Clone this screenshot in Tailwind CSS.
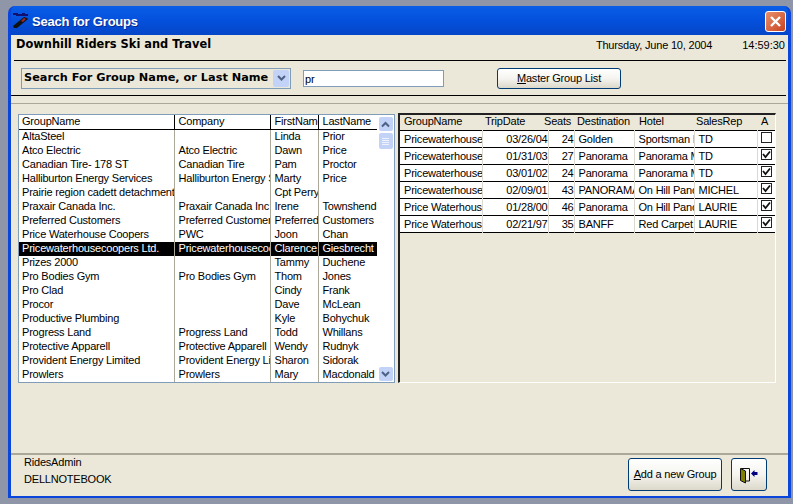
<!DOCTYPE html>
<html lang="en">
<head>
<meta charset="UTF-8">
<title>Seach for Groups</title>
<script src="https://cdn.jsdelivr.net/npm/@tailwindcss/browser@4"></script>
</head>
<body class="bg-[#8f96a8] w-[793px] h-[504px] overflow-hidden font-['Liberation_Sans',sans-serif] text-[11px] tracking-[-0.2px] leading-[14px] text-black">
<!-- window -->
<div class="ml-[8px] mt-[6px] w-[783px] h-[492px] flex flex-col rounded-t-[7px] bg-[#0a4fdc] border-x-[3px] border-b-[2px] border-[#0a46dc] overflow-hidden">
  <!-- title bar -->
  <div class="h-[29px] -mx-[3px] px-[4px] flex items-center shrink-0 bg-gradient-to-b from-[#0a5ee8] via-[#0450dc] to-[#0546c8]">
    <svg class="ml-[1px] w-[17px] h-[17px] shrink-0" viewBox="0 0 17 17">
      <path d="M0 1h5v1h4V1h3v1h3v2H3V3H0z" fill="#101070"/>
      <path d="M0 14L11 5l3 1 1 1-11 9H1z" fill="#111"/>
      <path d="M8 9l3-3 2 1-3 3z" fill="#a02828"/>
    </svg>
    <span class="ml-[2px] mt-[2px] text-white font-bold text-[13px] tracking-[-0.2px] [text-shadow:1px_1px_0_#0a2a90]">Seach for Groups</span>
    <div class="ml-auto mr-[1px] mt-[2px] w-[21px] h-[21px] rounded-[3px] border border-white bg-gradient-to-br from-[#e8906c] to-[#c8401c] flex items-center justify-center">
      <svg class="w-[13px] h-[13px]" viewBox="0 0 13 13"><path d="M2 2l9 9M11 2l-9 9" stroke="#fff" stroke-width="2.4"/></svg>
    </div>
  </div>

  <div class="flex-1 bg-[#ebe8d9] flex flex-col min-h-0">
    <!-- company header -->
    <div class="h-[25px] pl-[5px] pr-[3px] flex justify-between shrink-0">
      <span class="font-bold text-[11.4px] tracking-normal font-['DejaVu_Sans',sans-serif] mt-[2px] whitespace-nowrap">Downhill Riders Ski and Travel</span>
      <div class="flex mt-[3px]">
        <span>Thursday, June 10, 2004</span>
        <span class="ml-[30px] tracking-normal">14:59:30</span>
      </div>
    </div>
    <!-- search row -->
    <div class="ml-[3px] mr-[2px] h-[35px] border-t border-black shrink-0 flex items-center">
      <div class="ml-[7px] w-[270px] h-[21px] border border-[#7f9db9] bg-[#ebe8d9] flex items-center justify-between pl-[2px] pr-[1px]">
        <span class="font-bold text-[11.3px] tracking-normal font-['DejaVu_Sans',sans-serif] whitespace-nowrap">Search For Group Name, or Last Name</span>
        <span class="w-[16px] h-[17px] shrink-0 rounded-[2px] bg-[#c3d2f7] flex items-center justify-center">
          <svg class="w-[9px] h-[7px]" viewBox="0 0 9 7"><path d="M1 1l3.500 3.500L8 1" fill="none" stroke="#4d6185" stroke-width="2"/></svg>
        </span>
      </div>
      <div class="ml-[12px] w-[141px] h-[17px] border border-[#7f9db9] bg-white pl-[1px] leading-[16px]">pr</div>
      <div class="ml-[53px] w-[124px] h-[21px] rounded-[3px] border border-[#003c74] bg-gradient-to-b from-white via-[#f5f4ef] to-[#dcd8ca] text-center leading-[19px]"><u>M</u>aster Group List</div>
    </div>
    <div class="mr-[2px] h-[8px] border-t border-black shrink-0"></div>
    <div class="flex-1 border-t border-[#aca899] flex min-h-0 pt-[9px] pl-[7px]">
      <!-- groups list -->
      <div class="relative mt-[1px] w-[377px] h-[269px] border border-[#7f9db9] bg-white overflow-hidden">
        <table class="table-fixed w-[358px] border-collapse">
          <colgroup><col class="w-[155px]"><col class="w-[96px]"><col class="w-[48px]"><col class="w-[59px]"></colgroup>
          <thead>
            <tr class="h-[14px] border-b border-black text-left leading-[13px]">
              <th class="font-normal pl-[3px] pb-[1px] overflow-hidden whitespace-nowrap border-r border-black">GroupName</th>
              <th class="font-normal pl-[4px] pb-[1px] overflow-hidden whitespace-nowrap border-r border-black">Company</th>
              <th class="font-normal pl-[4px] pb-[1px] overflow-hidden whitespace-nowrap border-r border-black">FirstName</th>
              <th class="font-normal pl-[4px] pb-[1px] overflow-hidden whitespace-nowrap">LastName</th>
            </tr>
          </thead>
          <tbody class="leading-[13px] [&_td]:h-[14px] [&_td]:p-0 [&_td]:pb-[1px] [&_td]:pl-[4px] [&_td:first-child]:pl-[3px] [&_td]:overflow-hidden [&_td]:whitespace-nowrap [&_td:not(:last-child)]:border-r [&_td:not(:last-child)]:border-[#aca899]">
            <tr><td>AltaSteel</td><td></td><td>Linda</td><td>Prior</td></tr>
            <tr><td>Atco Electric</td><td>Atco Electric</td><td>Dawn</td><td>Price</td></tr>
            <tr><td>Canadian Tire- 178 ST</td><td>Canadian Tire</td><td>Pam</td><td>Proctor</td></tr>
            <tr><td>Halliburton Energy Services</td><td>Halliburton Energy Services</td><td>Marty</td><td>Price</td></tr>
            <tr><td>Prairie region cadett detachment</td><td></td><td>Cpt Perry</td><td></td></tr>
            <tr><td>Praxair Canada Inc.</td><td>Praxair Canada Inc</td><td>Irene</td><td>Townshend</td></tr>
            <tr><td>Preferred Customers</td><td>Preferred Customers</td><td>Preferred</td><td>Customers</td></tr>
            <tr><td>Price Waterhouse Coopers</td><td>PWC</td><td>Joon</td><td>Chan</td></tr>
            <tr class="bg-black text-white"><td>Pricewaterhousecoopers Ltd.</td><td>Pricewaterhousecoopers</td><td>Clarence</td><td>Giesbrecht</td></tr>
            <tr><td>Prizes 2000</td><td></td><td>Tammy</td><td>Duchene</td></tr>
            <tr><td>Pro Bodies Gym</td><td>Pro Bodies Gym</td><td>Thom</td><td>Jones</td></tr>
            <tr><td>Pro Clad</td><td></td><td>Cindy</td><td>Frank</td></tr>
            <tr><td>Procor</td><td></td><td>Dave</td><td>McLean</td></tr>
            <tr><td>Productive Plumbing</td><td></td><td>Kyle</td><td>Bohychuk</td></tr>
            <tr><td>Progress Land</td><td>Progress Land</td><td>Todd</td><td>Whillans</td></tr>
            <tr><td>Protective Apparell</td><td>Protective Apparell</td><td>Wendy</td><td>Rudnyk</td></tr>
            <tr><td>Provident Energy Limited</td><td>Provident Energy Limited</td><td>Sharon</td><td>Sidorak</td></tr>
            <tr><td>Prowlers</td><td>Prowlers</td><td>Mary</td><td>Macdonald</td></tr>
          </tbody>
        </table>
        <!-- scrollbar -->
        <div class="absolute top-0 right-0 bottom-0 w-[17px] bg-white flex flex-col items-center pt-[2px] pb-[1px]">
          <span class="w-[14px] h-[14px] rounded-[2px] bg-[#c3d2f7] flex items-center justify-center">
            <svg class="w-[9px] h-[7px]" viewBox="0 0 9 7"><path d="M1 5.500l3.500-3.500L8 5.500" fill="none" stroke="#4d6185" stroke-width="2"/></svg>
          </span>
          <span class="mt-[2px] w-[14px] h-[16px] rounded-[2px] bg-[#c3d2f7] flex flex-col items-center justify-center gap-[1px]">
            <i class="block w-[7px] h-px bg-[#eef2fd]"></i><i class="block w-[7px] h-px bg-[#eef2fd]"></i><i class="block w-[7px] h-px bg-[#eef2fd]"></i><i class="block w-[7px] h-px bg-[#eef2fd]"></i>
          </span>
          <span class="mt-auto w-[14px] h-[14px] rounded-[2px] bg-[#c3d2f7] flex items-center justify-center">
            <svg class="w-[9px] h-[7px]" viewBox="0 0 9 7"><path d="M1 1l3.500 3.500L8 1" fill="none" stroke="#4d6185" stroke-width="2"/></svg>
          </span>
        </div>
      </div>
      <!-- trips grid -->
      <div class="ml-[3px] w-[378px] h-[270px] border-t-2 border-l-2 border-[#222] border-r border-r-white border-b border-b-white overflow-hidden">
        <table class="table-fixed w-[375px] border-collapse">
          <colgroup><col class="w-[82px]"><col class="w-[66px]"><col class="w-[26px]"><col class="w-[60px]"><col class="w-[60px]"><col class="w-[63px]"><col class="w-[18px]"></colgroup>
          <thead>
            <tr class="h-[15px] text-left leading-[13px]">
              <th class="font-normal pl-[4px] pb-[1px] whitespace-nowrap">GroupName</th>
              <th class="font-normal pl-[3px] pb-[1px] whitespace-nowrap">TripDate</th>
              <th class="font-normal pb-[1px] whitespace-nowrap"><span class="inline-block -ml-[4px]">Seats</span></th>
              <th class="font-normal pl-[3px] pb-[1px] whitespace-nowrap">Destination</th>
              <th class="font-normal pl-[5px] pb-[1px] whitespace-nowrap">Hotel</th>
              <th class="font-normal pl-[2px] pb-[1px] whitespace-nowrap">SalesRep</th>
              <th class="font-normal text-center pr-[3px] pb-[1px] whitespace-nowrap">A</th>
            </tr>
          </thead>
          <tbody class="bg-white [&_tr]:h-[17px] [&_tr]:border-t [&_tr]:border-black [&_tr:last-child]:border-b [&_td]:p-0 [&_td]:pl-[4px] [&_td]:overflow-hidden [&_td]:whitespace-nowrap [&_td:not(:last-child)]:border-r [&_td]:border-[#dcdad0]">
            <tr><td>Pricewaterhousecoopers</td><td class="text-right pr-[2px]">03/26/04</td><td class="text-right pr-[3px]">24</td><td>Golden</td><td>Sportsman Inn</td><td>TD</td><td class="align-top !pl-[3px]"><span class="mt-[1px] block w-[11px] h-[11px] border border-[#222] bg-white"></span></td></tr>
            <tr><td>Pricewaterhousecoopers</td><td class="text-right pr-[2px]">01/31/03</td><td class="text-right pr-[3px]">27</td><td>Panorama</td><td>Panorama Mountain</td><td>TD</td><td class="align-top !pl-[3px]"><span class="mt-[1px] flex w-[11px] h-[11px] border border-[#222] bg-white items-center justify-center"><svg class="w-[9px] h-[9px]" viewBox="0 0 9 9"><path d="M1 4l2.500 3L8 1.500" fill="none" stroke="#111" stroke-width="1.800"/></svg></span></td></tr>
            <tr><td>Pricewaterhousecoopers</td><td class="text-right pr-[2px]">03/01/02</td><td class="text-right pr-[3px]">24</td><td>Panorama</td><td>Panorama Mountain</td><td>TD</td><td class="align-top !pl-[3px]"><span class="mt-[1px] flex w-[11px] h-[11px] border border-[#222] bg-white items-center justify-center"><svg class="w-[9px] h-[9px]" viewBox="0 0 9 9"><path d="M1 4l2.500 3L8 1.500" fill="none" stroke="#111" stroke-width="1.800"/></svg></span></td></tr>
            <tr><td>Pricewaterhousecoopers</td><td class="text-right pr-[2px]">02/09/01</td><td class="text-right pr-[3px]">43</td><td>PANORAMA</td><td>On Hill Panorama</td><td>MICHEL</td><td class="align-top !pl-[3px]"><span class="mt-[1px] flex w-[11px] h-[11px] border border-[#222] bg-white items-center justify-center"><svg class="w-[9px] h-[9px]" viewBox="0 0 9 9"><path d="M1 4l2.500 3L8 1.500" fill="none" stroke="#111" stroke-width="1.800"/></svg></span></td></tr>
            <tr><td>Price Waterhouse Coopers</td><td class="text-right pr-[2px]">01/28/00</td><td class="text-right pr-[3px]">46</td><td>Panorama</td><td>On Hill Panorama</td><td>LAURIE</td><td class="align-top !pl-[3px]"><span class="mt-[1px] flex w-[11px] h-[11px] border border-[#222] bg-white items-center justify-center"><svg class="w-[9px] h-[9px]" viewBox="0 0 9 9"><path d="M1 4l2.500 3L8 1.500" fill="none" stroke="#111" stroke-width="1.800"/></svg></span></td></tr>
            <tr><td>Price Waterhouse Coopers</td><td class="text-right pr-[2px]">02/21/97</td><td class="text-right pr-[3px]">35</td><td>BANFF</td><td>Red Carpet Inn</td><td>LAURIE</td><td class="align-top !pl-[3px]"><span class="mt-[1px] flex w-[11px] h-[11px] border border-[#222] bg-white items-center justify-center"><svg class="w-[9px] h-[9px]" viewBox="0 0 9 9"><path d="M1 4l2.500 3L8 1.500" fill="none" stroke="#111" stroke-width="1.800"/></svg></span></td></tr>
          </tbody>
        </table>
      </div>
    </div>
    <!-- footer -->
    <div class="h-[43px] border-t-2 border-[#aca899] shrink-0 flex pl-[13px] pr-[21px]">
      <div class="flex flex-col gap-[3px]">
        <span>RidesAdmin</span>
        <span>DELLNOTEBOOK</span>
      </div>
      <div class="ml-auto mt-[3px] w-[94px] h-[33px] rounded-[3px] border border-[#003c74] bg-gradient-to-b from-white via-[#f5f4ef] to-[#dcd8ca] text-center leading-[31px] whitespace-nowrap"><u>A</u>dd a new Group</div>
      <div class="ml-[9px] mt-[3px] w-[36px] h-[33px] rounded-[3px] border border-[#003c74] bg-gradient-to-b from-white via-[#f5f4ef] to-[#dcd8ca] flex items-center justify-center">
        <svg class="w-[22px] h-[20px]" viewBox="0 0 22 20">
          <path d="M3 3.500h8.500V16H7" fill="none" stroke="#111" stroke-width="1"/>
          <path d="M2.500 3.500l5 2.500v12l-5-2.500z" fill="#808000" stroke="#111" stroke-width="1"/>
          <path d="M13 8.500l3.500-3.500v2h3v3h-3v2z" fill="#000080"/>
        </svg>
      </div>
    </div>
  </div>
</div>
</body>
</html>
